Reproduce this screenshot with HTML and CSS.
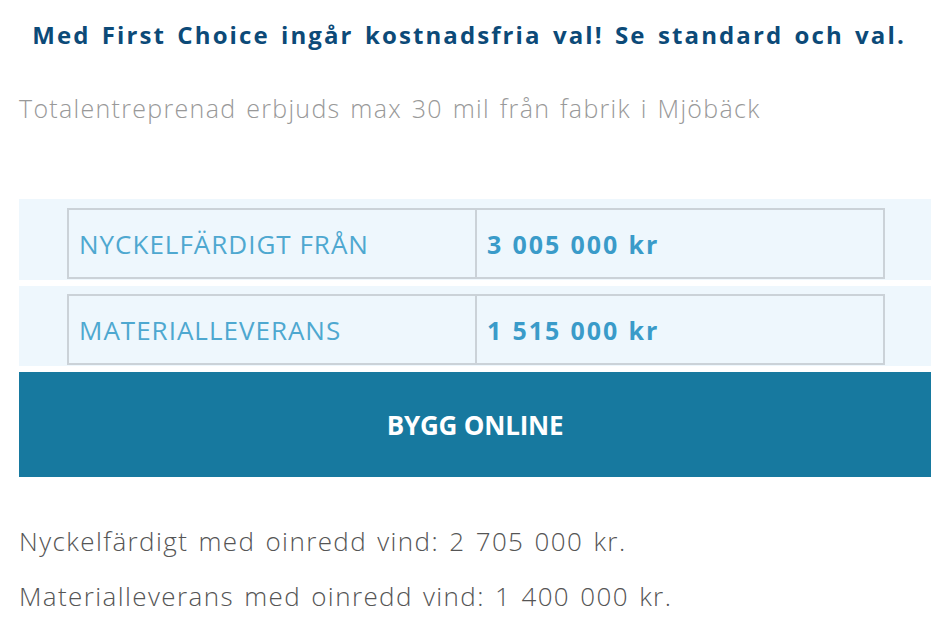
FILE: index.html
```
<!DOCTYPE html>
<html lang="sv">
<head>
<meta charset="utf-8">
<link rel="stylesheet" href="styles.css">
</head>
<body>
<div class="page">
  <h1 class="title">Med First Choice ingår kostnadsfria val! Se standard och val.</h1>
  <p class="sub">Totalentreprenad erbjuds max 30 mil från fabrik i Mjöbäck</p>
  <div class="band">
    <div class="prow">
      <div class="label">NYCKELFÄRDIGT FRÅN</div>
      <div class="value">3 005 000 kr</div>
    </div>
  </div>
  <div class="band band2">
    <div class="prow">
      <div class="label">MATERIALLEVERANS</div>
      <div class="value">1 515 000 kr</div>
    </div>
  </div>
  <a class="btn" href="#">BYGG ONLINE</a>
  <p class="note first">Nyckelfärdigt med oinredd vind: 2 705 000 kr.</p>
  <p class="note">Materialleverans med oinredd vind: 1 400 000 kr.</p>
</div>
</body>
</html>
```
FILE: styles.css
```
html, body { margin: 0; padding: 0; background: #fff; }
body { font-family: "Open Sans", "Noto Sans", sans-serif; }
.page { padding: 0 19px; width: 912px; }
.title {
  margin: 19px 0 0;
  padding-right: 12px;
  font-size: 24px;
  line-height: 32px;
  font-weight: 700;
  color: #0c4a78;
  text-align: center;
  letter-spacing: 2.1px;
  word-spacing: 3px;
  white-space: nowrap;
}
.sub {
  margin: 41px 0 0;
  font-size: 25px;
  line-height: 32px;
  font-weight: 300;
  color: #999;
  letter-spacing: 1.3px;
  word-spacing: 2px;
}
.band {
  margin-top: 75px;
  background: #eef7fd;
  padding: 9px 46px 1px 48px;
}
.band2 { margin-top: 6px; padding-top: 8px; }
.prow {
  display: flex;
  height: 67px;
  border: 2px solid #cbd2d8;
}
.label, .value {
  width: 50%;
  display: flex;
  align-items: center;
  padding-left: 10px;
}
.label {
  border-right: 2px solid #cbd2d8;
  color: #4ea8d0;
  font-weight: 400;
  font-size: 26px;
  letter-spacing: 1px;
}
.value {
  color: #3a9bc9;
  font-weight: 700;
  font-size: 25px;
  letter-spacing: 1.9px;
  word-spacing: 1px;
}
.btn {
  display: flex;
  align-items: center;
  justify-content: center;
  margin-top: 6px;
  height: 105px;
  background: #17799f;
  color: #fff;
  font-size: 26px;
  font-weight: 700;
  letter-spacing: -0.2px;
  text-decoration: none;
}
.note {
  margin: 0;
  font-size: 26px;
  line-height: 32px;
  font-weight: 300;
  color: #555;
  letter-spacing: 1.4px;
  word-spacing: 2px;
}
.note.first { margin-top: 48px; }
.note + .note { margin-top: 23px; }
```
